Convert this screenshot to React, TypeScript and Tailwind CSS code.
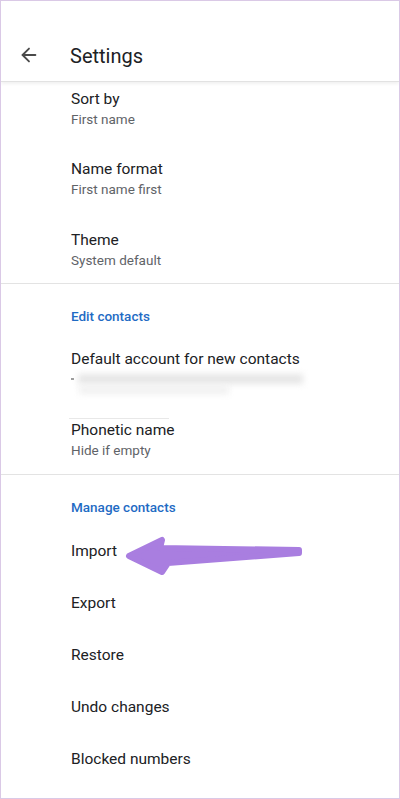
import { ArrowLeft } from "lucide-react";

type Item = { title: string; sub?: string };

const TwoLine = ({ title, sub, h }: Item & { h: string }) => (
  <div className={`${h} pl-[70px]`}>
    <p className="text-[15.5px] leading-[22px] text-[#202124]">{title}</p>
    {sub && <p className="text-[13.5px] leading-[18px] text-[#5f6368]">{sub}</p>}
  </div>
);

const SectionLabel = ({ label }: { label: string }) => (
  <p className="pl-[70px] text-[13.5px] leading-[20px] font-medium text-[#1f6bc4]">{label}</p>
);

const manage = ["Import", "Export", "Restore", "Undo changes", "Blocked numbers"];

const PointerArrow = () => (
  <svg
    className="absolute left-0 top-0 pointer-events-none"
    width="400"
    height="799"
    viewBox="0 0 400 799"
  >
    <polygon
      points="128,555 161,539 159,547 298,549 298,552 167,562 161,571"
      fill="#a97ee0"
      stroke="#a97ee0"
      strokeWidth={6}
      strokeLinejoin="round"
    />
  </svg>
);

const App = () => {
  return (
    <div
      className="relative w-[400px] h-[799px] overflow-hidden bg-white border border-[#dac9e6]"
      style={{ fontFamily: "Roboto, 'Noto Sans', sans-serif" }}
    >
      <header className="h-[81px] flex items-end pb-[12px] bg-white border-b border-[#e2e2e2] shadow-[0_2px_3px_rgba(0,0,0,0.06)] relative z-10">
        <ArrowLeft className="ml-[17px] mb-[3px] text-[#4a4a4a]" size={22} strokeWidth={2} />
        <h1 className="ml-[30px] text-[20px] leading-[26px] text-[#202124]">Settings</h1>
      </header>

      <div className="pt-[6px]">
        <TwoLine title="Sort by" sub="First name" h="h-[70px]" />
        <TwoLine title="Name format" sub="First name first" h="h-[71px]" />
        <TwoLine title="Theme" sub="System default" h="h-[54px]" />
      </div>
      <div className="h-px bg-[#e3e3e3]" />

      <div className="pt-[22px]">
        <SectionLabel label="Edit contacts" />
        <div className="mt-[22px] pl-[70px] h-[70px]">
          <p className="text-[15.5px] leading-[22px] text-[#202124]">Default account for new contacts</p>
          <div className="flex items-center gap-[4px] mt-[4px]">
            <span className="w-[3px] h-[2px] bg-[#9a9a9a]" />
            <div className="w-[225px] h-[10px] bg-[#e6e6e6] blur-[3px]" />
          </div>
          <div className="ml-[8px] mt-[2px] w-[150px] h-[8px] bg-[#f0f0f0] blur-[3px]" />
        </div>
        <div className="ml-[68px] w-[100px] h-px bg-[#e8e8e8]" />
        <div className="pl-[70px] h-[55px]">
          <p className="text-[15.5px] leading-[22px] text-[#202124]">Phonetic name</p>
          <p className="text-[13.5px] leading-[18px] text-[#5f6368]">Hide if empty</p>
        </div>
      </div>
      <div className="h-px bg-[#e3e3e3]" />

      <div className="pt-[22px]">
        <SectionLabel label="Manage contacts" />
        <div className="mt-[23px] flex flex-col gap-[30px]">
          {manage.map((m) => (
            <p key={m} className="pl-[70px] text-[15.5px] leading-[22px] text-[#202124]">
              {m}
            </p>
          ))}
        </div>
      </div>

      <PointerArrow />
    </div>
  );
};

export default App;
